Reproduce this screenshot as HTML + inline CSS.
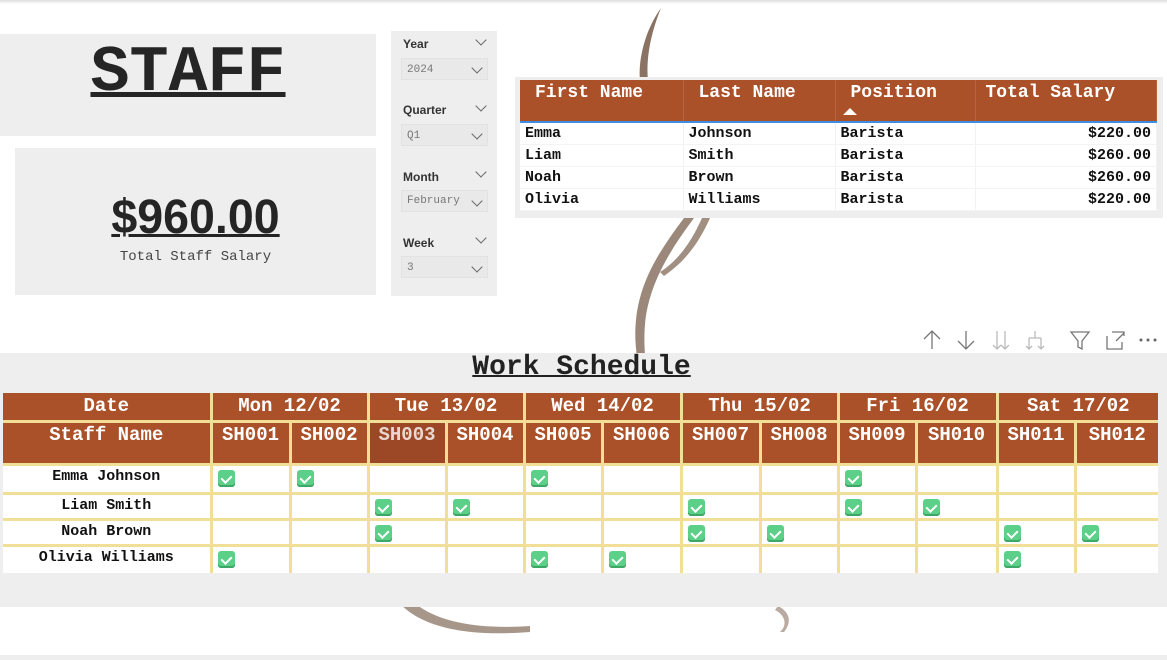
<!DOCTYPE html>
<html><head><meta charset="utf-8"><style>
*{margin:0;padding:0;box-sizing:border-box}
body{width:1167px;height:660px;position:relative;background:#fff;overflow:hidden;font-family:"Liberation Mono",monospace}
.a{position:absolute}
.gray{background:#eeeeee}
.cm{font-family:"Liberation Mono",monospace;font-weight:bold}
.sl{font-family:"Liberation Sans",sans-serif;font-weight:bold;font-size:12px;color:#333}
.sb{background:#e9e9e9;border:1px solid #e2e2e2;font-size:11px;color:#777;padding:5px 0 0 5px;font-family:"Liberation Mono",monospace}
.chev{position:absolute;width:8px;height:8px;border-right:1px solid #666;border-bottom:1px solid #666;transform:rotate(45deg)}
table{border-collapse:collapse}
#sal td{font-family:"Liberation Mono",monospace;font-weight:bold;font-size:15px;color:#111;height:22px;padding:0 5px;border-right:1px solid #f2f2f2;border-bottom:1px solid #f4f4f4}
#sal th{background:#ab5129;color:#fff;font-size:18px;text-align:left;height:42px;vertical-align:top;padding:3px 0 0 15px;border-right:1px solid #b86440;border-bottom:2px solid #3d8ee0}
#sch{position:absolute;left:3px;top:393px;table-layout:fixed;border:none}
#sch td,#sch th{border:3px solid #f1df97;text-align:center;font-family:"Liberation Mono",monospace;font-weight:bold}
#sch tr:first-child th{border-top:none}
#sch tr:last-child td{border-bottom:none}
#sch tr>*:first-child{border-left:none}
#sch tr>*:last-child{border-right:none}
#sch th{background:#ab5129;color:#fff;font-size:19px}
#sch td{background:#fff;font-size:15px;color:#111;text-align:left;padding-left:5px;vertical-align:top;padding-top:4px}
#sch td.n{text-align:center;padding:2px 0 0 0;border-left:none;border-right:1px solid #5aa0e0}
.ck{display:inline-block;width:17px;height:17px;background:#5ccf88;border-radius:3px;box-shadow:inset 0 -2px 0 #3fa766;position:relative;vertical-align:top}
.ck:after{content:"";position:absolute;left:5px;top:3px;width:5px;height:8px;border-right:2px solid #fff;border-bottom:2px solid #fff;transform:rotate(45deg)}
</style></head><body>
<div class="a" style="left:0;top:0;width:1167px;height:4px;background:linear-gradient(#ddd,#fff)"></div>

<svg class="a" style="left:0;top:0" width="1167" height="660">
<g fill="#8a7363" stroke="none">
<path d="M661 8 C645 30 638 60 640 80 L648 80 C646 60 650 35 661 8Z"/>
<path d="M684 218 C660 250 640 280 636 320 C633 350 640 375 648 400 L652 400 C646 370 642 345 646 315 C652 280 670 250 694 218Z" opacity=".85"/>
<path d="M702 218 C690 245 676 262 660 272 L664 276 C684 262 698 245 710 218Z" opacity=".8"/>
<path d="M385 575 C392 610 430 640 530 632 L530 626 C440 632 405 605 395 575Z" opacity=".75"/>
<path d="M775 610 C785 615 788 625 780 632 L784 632 C792 622 790 612 778 606Z" opacity=".6"/>
</g>
</svg>

<div class="a gray" style="left:0;top:34px;width:376px;height:102px"></div>
<div class="a cm" style="left:0;top:38px;width:376px;text-align:center;font-size:65px;line-height:70px;color:#252525;text-decoration:underline;text-decoration-thickness:5px;text-underline-offset:2px">STAFF</div>
<div class="a gray" style="left:15px;top:148px;width:361px;height:147px"></div>
<div class="a" style="left:15px;top:190px;width:361px;text-align:center;font-family:'Liberation Sans',sans-serif;font-weight:bold;font-size:48px;color:#252525;text-decoration:underline;text-decoration-thickness:3px;text-underline-offset:1px;transform:scaleX(.97)">$960.00</div>
<div class="a" style="left:15px;top:249px;width:361px;text-align:center;font-size:14px;color:#444">Total Staff Salary</div>

<div class="a gray" style="left:391px;top:31px;width:106px;height:265px"></div>
<div class="a sl" style="left:403px;top:37px">Year</div><div class="chev" style="left:477px;top:36px"></div>
<div class="a sb" style="left:401px;top:58px;width:87px;height:22px">2024</div><div class="chev" style="left:473px;top:64px"></div>
<div class="a sl" style="left:403px;top:103px">Quarter</div><div class="chev" style="left:477px;top:102px"></div>
<div class="a sb" style="left:401px;top:124px;width:87px;height:22px">Q1</div><div class="chev" style="left:473px;top:130px"></div>
<div class="a sl" style="left:403px;top:170px">Month</div><div class="chev" style="left:477px;top:168px"></div>
<div class="a sb" style="left:401px;top:190px;width:87px;height:22px;padding-top:4px">February</div><div class="chev" style="left:473px;top:197px"></div>
<div class="a sl" style="left:403px;top:236px">Week</div><div class="chev" style="left:477px;top:234px"></div>
<div class="a sb" style="left:401px;top:256px;width:87px;height:22px">3</div><div class="chev" style="left:473px;top:263px"></div>

<div class="a gray" style="left:515px;top:77px;width:648px;height:141px"></div>
<table id="sal" class="a" style="left:520px;top:80px;width:637px;background:#fff">
<tr><th style="width:163px">First Name</th><th style="width:152px">Last Name</th><th style="width:140px;position:relative">Position<span style="position:absolute;left:7px;top:28px;width:0;height:0;border-left:7px solid transparent;border-right:7px solid transparent;border-bottom:7px solid #fff"></span></th><th style="padding-left:10px">Total Salary</th></tr>
<tr><td>Emma</td><td>Johnson</td><td>Barista</td><td style="text-align:right">$220.00</td></tr>
<tr><td>Liam</td><td>Smith</td><td>Barista</td><td style="text-align:right">$260.00</td></tr>
<tr><td>Noah</td><td>Brown</td><td>Barista</td><td style="text-align:right">$260.00</td></tr>
<tr><td>Olivia</td><td>Williams</td><td>Barista</td><td style="text-align:right">$220.00</td></tr>
</table>

<svg class="a" style="left:920px;top:328px" width="245" height="24" fill="none" stroke="#777" stroke-width="1.3">
<path d="M12 3V21M4 11L12 3L20 11"/>
<path d="M46 3V21M38 13L46 21L54 13"/>
<g stroke="#bbb"><path d="M77 3V21M73 17L77 21L81 17M85 3V21M81 17L85 21L89 17"/>
<path d="M115 3V10M109 10H121M109 10V21M121 10V21M106 18L109 21L112 18M118 18L121 21L124 18"/></g>
<path d="M151 4H169L162 13V21L158 19V13Z"/>
<path d="M187 8V21H202V14M192 4H204V8M196 13L204 5"/>
<g fill="#666" stroke="none"><circle cx="221" cy="12" r="1.5"/><circle cx="228" cy="12" r="1.5"/><circle cx="235" cy="12" r="1.5"/></g>
</svg>

<div class="a gray" style="left:0;top:353px;width:1167px;height:254px"></div>
<div class="a cm" style="left:0;top:352px;width:1163px;text-align:center;font-size:28px;color:#222;text-decoration:underline;text-decoration-thickness:2px">Work Schedule</div>

<table id="sch">
<colgroup><col style="width:208px"><col style="width:79px"><col style="width:78px"><col style="width:78px"><col style="width:78px"><col style="width:78px"><col style="width:79px"><col style="width:79px"><col style="width:78px"><col style="width:78px"><col style="width:81px"><col style="width:78px"><col style="width:83px"></colgroup>
<tr style="height:28px"><th>Date</th><th colspan="2">Mon 12/02</th><th colspan="2">Tue 13/02</th><th colspan="2">Wed 14/02</th><th colspan="2">Thu 15/02</th><th colspan="2">Fri 16/02</th><th colspan="2">Sat 17/02</th></tr>
<tr style="height:43px;vertical-align:top"><th style="border-bottom:2px solid #8fb0e0;padding-top:1px">Staff Name</th><th style="border-bottom:2px solid #8fb0e0;padding-top:1px">SH001</th><th style="border-bottom:2px solid #8fb0e0;padding-top:1px">SH002</th><th style="border-bottom:2px solid #8fb0e0;padding-top:1px;background:#9c4826;color:#e8d8d0">SH003</th><th style="border-bottom:2px solid #8fb0e0;padding-top:1px">SH004</th><th style="border-bottom:2px solid #8fb0e0;padding-top:1px">SH005</th><th style="border-bottom:2px solid #8fb0e0;padding-top:1px">SH006</th><th style="border-bottom:2px solid #8fb0e0;padding-top:1px">SH007</th><th style="border-bottom:2px solid #8fb0e0;padding-top:1px">SH008</th><th style="border-bottom:2px solid #8fb0e0;padding-top:1px">SH009</th><th style="border-bottom:2px solid #8fb0e0;padding-top:1px">SH010</th><th style="border-bottom:2px solid #8fb0e0;padding-top:1px">SH011</th><th style="border-bottom:2px solid #8fb0e0;padding-top:1px">SH012</th></tr>
<tr style="height:29px"><td class="n">Emma Johnson</td><td><i class="ck"></i></td><td><i class="ck"></i></td><td></td><td></td><td><i class="ck"></i></td><td></td><td></td><td></td><td><i class="ck"></i></td><td></td><td></td><td></td></tr>
<tr style="height:26px"><td class="n">Liam Smith</td><td></td><td></td><td><i class="ck"></i></td><td><i class="ck"></i></td><td></td><td></td><td><i class="ck"></i></td><td></td><td><i class="ck"></i></td><td><i class="ck"></i></td><td></td><td></td></tr>
<tr style="height:26px"><td class="n">Noah Brown</td><td></td><td></td><td><i class="ck"></i></td><td></td><td></td><td></td><td><i class="ck"></i></td><td><i class="ck"></i></td><td></td><td></td><td><i class="ck"></i></td><td><i class="ck"></i></td></tr>
<tr style="height:28px"><td class="n">Olivia Williams</td><td><i class="ck"></i></td><td></td><td></td><td></td><td><i class="ck"></i></td><td><i class="ck"></i></td><td></td><td></td><td></td><td></td><td><i class="ck"></i></td><td></td></tr>
</table>

<div class="a" style="left:0;top:655px;width:1167px;height:5px;background:#eee"></div>
</body></html>
